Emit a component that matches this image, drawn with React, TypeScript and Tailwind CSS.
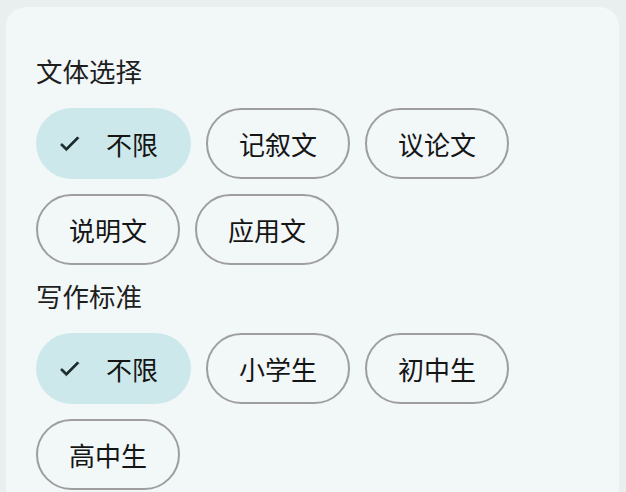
import React from "react";

const font = { fontFamily: '"Noto Sans CJK SC", "Noto Sans", sans-serif' };

function Check() {
  return (
    <svg width="25" height="25" viewBox="0 0 24 24" className="shrink-0">
      <path d="M9 16.17L4.83 12l-1.42 1.41L9 19 21 7l-1.41-1.41z" fill="#1b2a2c" stroke="#1b2a2c" strokeWidth="0.8" />
    </svg>
  );
}

function Chip({ label, selected }: { label: string; selected?: boolean }) {
  if (selected) {
    return (
      <div className="flex h-[71px] items-center rounded-full bg-[#cde8ea] pl-[21px] pr-[33px] gap-[24px]">
        <Check />
        <span className="text-[26px] leading-none text-[#151515]">{label}</span>
      </div>
    );
  }
  return (
    <div className="flex h-[71px] items-center rounded-full border-2 border-[#9e9e9e] px-[31px]">
      <span className="text-[26px] leading-none text-[#151515]">{label}</span>
    </div>
  );
}

function Section({ title, items }: { title: string; items: string[] }) {
  return (
    <div className="flex flex-col">
      <div className="text-[26.5px] leading-[36px] text-[#1e1e1e]">{title}</div>
      <div className="mt-[19px] flex flex-wrap gap-x-[15px] gap-y-[15px] w-[480px]">
        {items.map((it, i) => (
          <Chip key={it + i} label={it} selected={i === 0} />
        ))}
      </div>
    </div>
  );
}

export default function App() {
  return (
    <div className="w-[626px] h-[492px] overflow-hidden bg-[#e9eeef] pl-[6px] pr-[7px] pt-[7px]" style={font}>
      <div className="h-[520px] rounded-[20px] bg-[#f2f7f8] pl-[30px] pt-[46px] flex flex-col gap-[13px]">
        <Section title="文体选择" items={["不限", "记叙文", "议论文", "说明文", "应用文"]} />
        <Section title="写作标准" items={["不限", "小学生", "初中生", "高中生"]} />
      </div>
    </div>
  );
}
